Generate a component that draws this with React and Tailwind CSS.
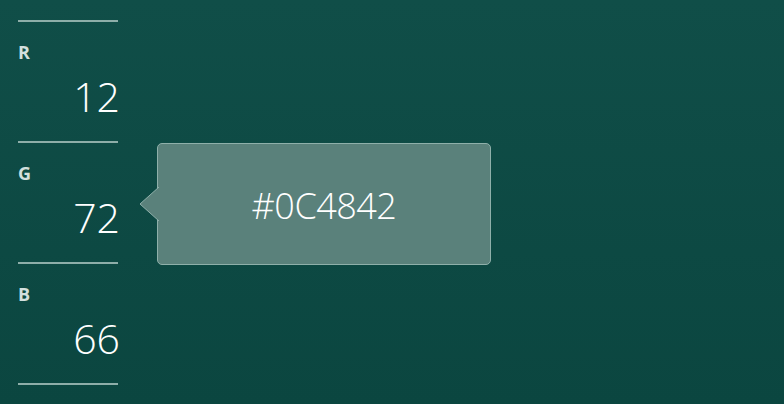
import React from 'react';

const channels = [
    { label: 'R', value: 12 },
    { label: 'G', value: 72 },
    { label: 'B', value: 66 },
];

const App = () => {
    return (
        <div
            className="relative w-[784px] h-[404px] overflow-hidden bg-gradient-to-b from-[#104e48] to-[#0b4640] text-white"
            style={{ fontFamily: '"Open Sans", "Noto Sans", sans-serif' }}
        >
            <div className="pt-[20px] pl-[18px] w-[118px]">
                <div className="h-[2px] bg-[#8eaea9]" />
                {channels.map(ch => (
                    <div key={ch.label}>
                        <div className="relative h-[119px]">
                            <div className="pt-[20px] text-[18px] leading-[20px] font-bold text-[#d3e0de]">{ch.label}</div>
                            <div className="text-right text-[41px] leading-[48px] font-light mt-[10px] mr-[-2px]">{ch.value}</div>

                            {ch.label === 'G' && (
                                <div className="absolute left-[139px] top-0 z-10">
                                    {/* tooltip with the hex value */}
                                    <div className="relative w-[334px] h-[122px] rounded-[5px] border border-[#8fb0aa] bg-[#5a817b] flex items-center justify-center">
                                        <span className="text-[36px] font-light tracking-[-0.5px] mt-[4px]">#0C4842</span>
                                        <svg
                                            className="absolute left-[-19px] top-[42px]"
                                            width="21"
                                            height="36"
                                            viewBox="0 0 21 36"
                                        >
                                            <polygon points="20,1 1,18 20,35" fill="#5a817b" />
                                            <polyline points="20,1 1,18 20,35" fill="none" stroke="#8fb0aa" strokeWidth="1" />
                                        </svg>
                                    </div>
                                </div>
                            )}
                        </div>
                        <div className="h-[2px] bg-[#8eaea9]" />
                    </div>
                ))}
            </div>
        </div>
    );
};

export default App;
